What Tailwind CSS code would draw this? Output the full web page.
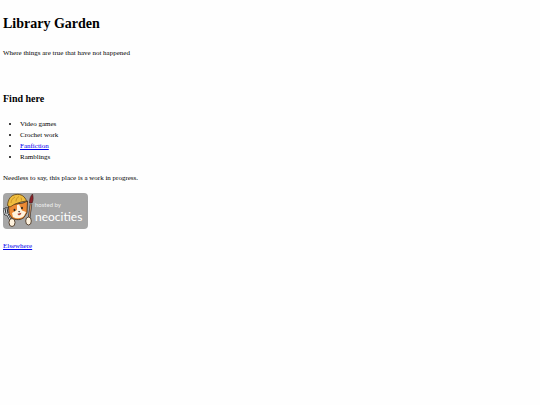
<!DOCTYPE html>
<html lang="en">
<head>
  <meta charset="utf-8">
  <meta name="viewport" content="width=device-width, initial-scale=1">
  <title>Library Garden</title>
  <script src="https://cdn.jsdelivr.net/npm/@tailwindcss/browser@4"></script>
</head>
<body class="bg-[#fefefe] px-[3px] py-3 font-['Liberation_Serif',serif] text-[7px] leading-[11px] text-black">
  <!-- Header -->
  <header class="mb-8">
    <h1 class="mb-3 text-[14px] leading-6 font-bold">Library Garden</h1>
    <p>Where things are true that have not happened</p>
  </header>

  <main>
    <!-- Contents -->
    <h2 class="mb-3 text-[10px] leading-4 font-bold">Find here</h2>
    <ul class="mb-[10px] list-disc pl-[17px]">
      <li>Video games</li>
      <li>Crochet work</li>
      <li><a href="#fanfiction" class="text-[#0000ee] underline">Fanfiction</a></li>
      <li>Ramblings</li>
    </ul>
    <p class="mb-[9px]">Needless to say, this place is a work in progress.</p>

    <!-- Hosting badge -->
    <a href="#neocities" class="mb-3 block w-[85px]">
      <svg class="block h-9 w-full" viewBox="0 0 85 36" role="img" aria-label="hosted by neocities">
        <rect width="85" height="36" rx="4" fill="#a6a6a6"/>
        <!-- Fork -->
        <g fill="none" stroke-linecap="round" stroke-linejoin="round">
          <path d="M1 16l1 5 2 1 2-2-1-5M3 15l1 6 4 7" stroke="#333" stroke-width="2.2"/>
          <path d="M1 16l1 5 2 1 2-2-1-5M3 15l1 6 4 7" stroke="#d8dde0" stroke-width="1"/>
        </g>
        <!-- Brush -->
        <path d="M28 11l-2 15" stroke="#333" stroke-width="2.4"/>
        <path d="M28 11l-2 15" stroke="#c08a62" stroke-width="1.3"/>
        <path d="M26.5 10c0-4 1-7 3-9 .8 3 1 6-.4 9z" fill="#8d2028" stroke="#3a1a1a" stroke-width=".6"/>
        <!-- Cat -->
        <path d="M5.500 12l.5 9 3 4c4 2.500 9 2 12-.5l3-5L24.500 8 20 10z" fill="#ec8a35" stroke="#3a2412" stroke-width=".8" stroke-linejoin="round"/>
        <path d="M14 12l0 5-5 3 1 4c4 2 8 1.500 11-1l2-4-4-1.500-3-6z" fill="#fff3df"/>
        <ellipse cx="11.500" cy="17" rx=".9" ry="1.300" fill="#222"/>
        <ellipse cx="19" cy="15" rx=".9" ry="1.300" fill="#222"/>
        <path d="M14.800 18.500l2.400-.6-.9 1.500z" fill="#222"/>
        <path d="M14.500 20.700l3.800-1c0 2.700-3 3.500-3.800 1z" fill="#b84a38"/>
        <!-- Helmet -->
        <path d="M4.500 12.500C5 6 8 2 13 1.500c5-.8 9 2 10.500 6.500l-5.500 1-6 2-5 3z" fill="#f0bd3e" stroke="#5b3d12" stroke-width=".8" stroke-linejoin="round"/>
        <path d="M8 10c0-3 2-5 4-6M13 8.500c0-2 1-4 3-5M18.500 7.500c0-1 0-2-.5-3" fill="none" stroke="#b98420" stroke-width=".7"/>
        <!-- Paws -->
        <ellipse cx="9" cy="29.500" rx="3" ry="4" fill="#fff3df" stroke="#3a2412" stroke-width=".8"/>
        <ellipse cx="25.500" cy="28" rx="2.800" ry="4" fill="#fff3df" stroke="#3a2412" stroke-width=".8"/>
        <text x="32" y="14" class="fill-[#eeeeee] font-['Lato',sans-serif] text-[6px]">hosted by</text>
        <text x="32" y="28" class="fill-white font-['Lato',sans-serif] text-[12px]">neocities</text>
      </svg>
    </a>
    <a href="#elsewhere" class="text-[#0000ee] underline">Elsewhere</a>
  </main>
</body>
</html>
